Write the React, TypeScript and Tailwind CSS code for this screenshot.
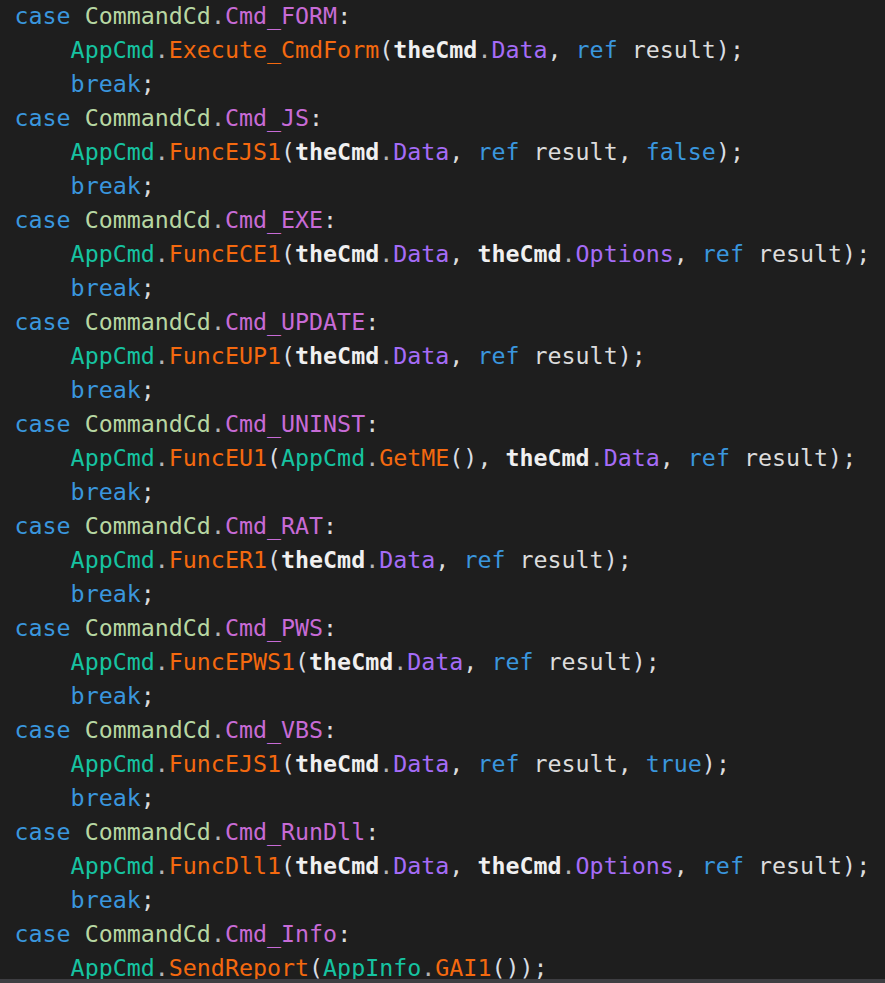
type Tok = [string, string]

const kw = "text-[#3a96dd]"
const en = "text-[#b8d7a3]"
const mem = "text-[#c76bd6]"
const prop = "text-[#a56cf7]"
const cls = "text-[#16c3a1]"
const fn = "text-[#f4690f]"
const txt = "text-[#dcdcdc]"
const dot = "text-[#b4b4b4]"
const par = "text-[#d8dde4]"
const bold = "text-[#f0f0f0] font-bold"

const caseLine = (name: string): Tok[] => [
  [kw, "case "],
  [en, "CommandCd"],
  [dot, "."],
  [mem, name],
  [txt, ":"],
]

const breakLine: Tok[] = [[kw, "    break"], [txt, ";"]]

const call = (name: string, args: Tok[]): Tok[] => [
  [cls, "    AppCmd"],
  [dot, "."],
  [fn, name],
  [par, "("],
  ...args,
  [par, ")"],
  [txt, ";"],
]

const data: Tok[] = [[bold, "theCmd"], [dot, "."], [prop, "Data"]]
const options: Tok[] = [[bold, "theCmd"], [dot, "."], [prop, "Options"]]
const refResult: Tok[] = [[kw, "ref "], [txt, "result"]]
const comma: Tok = [txt, ", "]

const lines: Tok[][] = [
  caseLine("Cmd_FORM"),
  call("Execute_CmdForm", [...data, comma, ...refResult]),
  breakLine,
  caseLine("Cmd_JS"),
  call("FuncEJS1", [...data, comma, ...refResult, comma, [kw, "false"]]),
  breakLine,
  caseLine("Cmd_EXE"),
  call("FuncECE1", [...data, comma, ...options, comma, ...refResult]),
  breakLine,
  caseLine("Cmd_UPDATE"),
  call("FuncEUP1", [...data, comma, ...refResult]),
  breakLine,
  caseLine("Cmd_UNINST"),
  call("FuncEU1", [
    [cls, "AppCmd"],
    [dot, "."],
    [fn, "GetME"],
    [par, "()"],
    comma,
    ...data,
    comma,
    ...refResult,
  ]),
  breakLine,
  caseLine("Cmd_RAT"),
  call("FuncER1", [...data, comma, ...refResult]),
  breakLine,
  caseLine("Cmd_PWS"),
  call("FuncEPWS1", [...data, comma, ...refResult]),
  breakLine,
  caseLine("Cmd_VBS"),
  call("FuncEJS1", [...data, comma, ...refResult, comma, [kw, "true"]]),
  breakLine,
  caseLine("Cmd_RunDll"),
  call("FuncDll1", [...data, comma, ...options, comma, ...refResult]),
  breakLine,
  caseLine("Cmd_Info"),
  call("SendReport", [[cls, "AppInfo"], [dot, "."], [fn, "GAI1"], [par, "()"]]),
]

export default function App() {
  return (
    <div className="w-[885px] h-[983px] bg-[#1e1e1e] flex flex-col overflow-hidden">
      <div
        className="h-[979px] shrink-0 overflow-hidden pl-[14.5px] text-[23.3px] leading-[34px] whitespace-pre"
        style={{ fontFamily: '"DejaVu Sans Mono", "Liberation Mono", monospace' }}
      >
        <div className="-mt-[1px]">
          {lines.map((line, i) => (
            <div key={i} className="h-[34px]">
              {line.map(([c, t], j) => (
                <span key={j} className={c}>
                  {t}
                </span>
              ))}
            </div>
          ))}
        </div>
      </div>
      <div className="h-[4px] shrink-0 bg-[#3e3e42]" />
    </div>
  )
}
